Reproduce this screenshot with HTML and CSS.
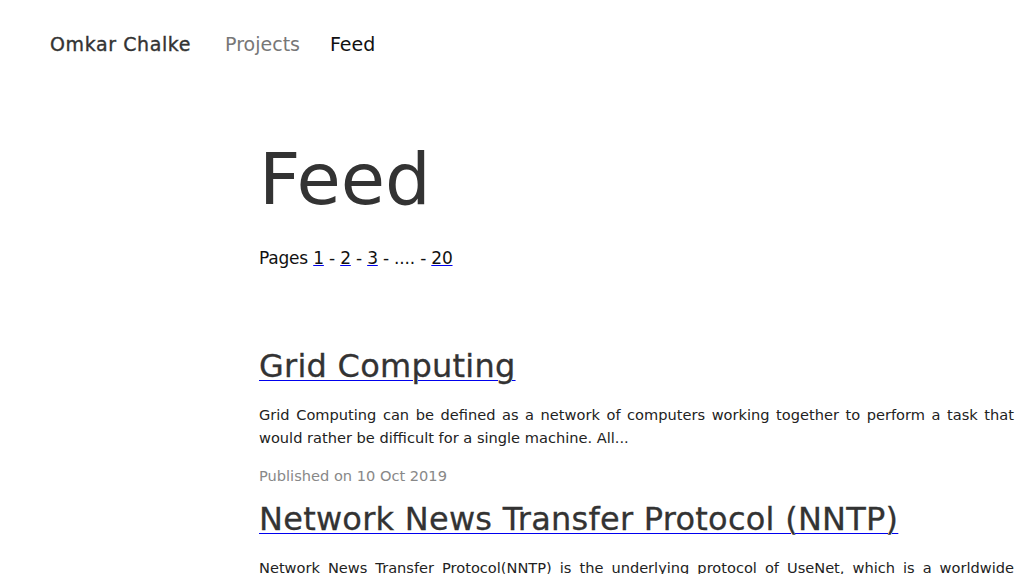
FILE: index.html
```html
<!DOCTYPE html>
<html lang="en">
<head>
<meta charset="utf-8">
<title>Feed - Omkar Chalke</title>
<link rel="stylesheet" href="styles.css">
</head>
<body>
<header class="site-nav">
  <a class="brand" href="#">Omkar Chalke</a>
  <nav class="nav-links">
    <a class="nav-link" href="#">Projects</a>
    <a class="nav-link active" href="#">Feed</a>
  </nav>
</header>
<main class="feed">
  <h1 class="feed-title">Feed</h1>
  <p class="pages">Pages <a href="#">1</a> - <a href="#">2</a> - <a href="#">3</a> - .... - <a href="#">20</a></p>
  <section class="posts">
    <article class="post">
      <h2 class="post-title"><a href="#">Grid Computing</a></h2>
      <p class="post-excerpt">Grid Computing can be defined as a network of computers working together to perform a task that would rather be difficult for a single machine. All...</p>
      <p class="post-date">Published on 10 Oct 2019</p>
    </article>
    <article class="post">
      <h2 class="post-title"><a href="#">Network News Transfer Protocol (NNTP)</a></h2>
      <p class="post-excerpt">Network News Transfer Protocol(NNTP) is the underlying protocol of UseNet, which is a worldwide distributed discussion system. It is used for reading and posting articles to...</p>
      <p class="post-date">Published on 06 Oct 2019</p>
    </article>
  </section>
</main>
</body>
</html>
```
FILE: styles.css
```css
html, body {
  margin: 0;
  padding: 0;
  background: #ffffff;
}
body {
  font-family: "DejaVu Sans", "Liberation Sans", sans-serif;
  color: #222222;
}
a {
  text-decoration: none;
}
.site-nav {
  display: flex;
  align-items: center;
  padding: 35px 0 0 50px;
  font-size: 19px;
  line-height: 19px;
}
.brand {
  color: #333333;
  margin-right: 34px;
  letter-spacing: 0.6px;
  -webkit-text-stroke: 0.35px #333333;
}
.nav-links {
  display: flex;
  gap: 30px;
}
.nav-link {
  color: #777777;
}
.nav-link.active {
  color: #111111;
}
.feed {
  margin-left: 259px;
  width: 755px;
}
.feed-title {
  font-size: 72px;
  line-height: 72px;
  font-weight: 400;
  color: #333333;
  margin: 89px 0 0 0;
}
.pages {
  font-size: 17px;
  line-height: 26px;
  margin: 30px 0 0 0;
  color: #111111;
  letter-spacing: -0.2px;
}
.pages a {
  color: #111111;
  text-decoration: underline;
  text-decoration-color: #0000ee;
  text-decoration-thickness: 1px;
}
.posts {
  margin: 0;
  padding-top: 64px;
}
.post-title {
  font-size: 32px;
  line-height: 40px;
  font-weight: 400;
  margin: 11px 0 18px 0;
  letter-spacing: 0.25px;
}
.post-title a {
  color: #333333;
  text-decoration: underline;
  text-decoration-color: #0000ee;
  text-decoration-thickness: 1px;
  text-underline-offset: 3px;
  -webkit-text-stroke: 0.3px #333333;
}
.post-excerpt {
  font-size: 14.6px;
  line-height: 22.5px;
  margin: 0;
  text-align: justify;
  color: #222222;
}
.post-date {
  font-size: 14.6px;
  line-height: 22.5px;
  margin: 16px 0 0 0;
  color: #888888;
}
```
